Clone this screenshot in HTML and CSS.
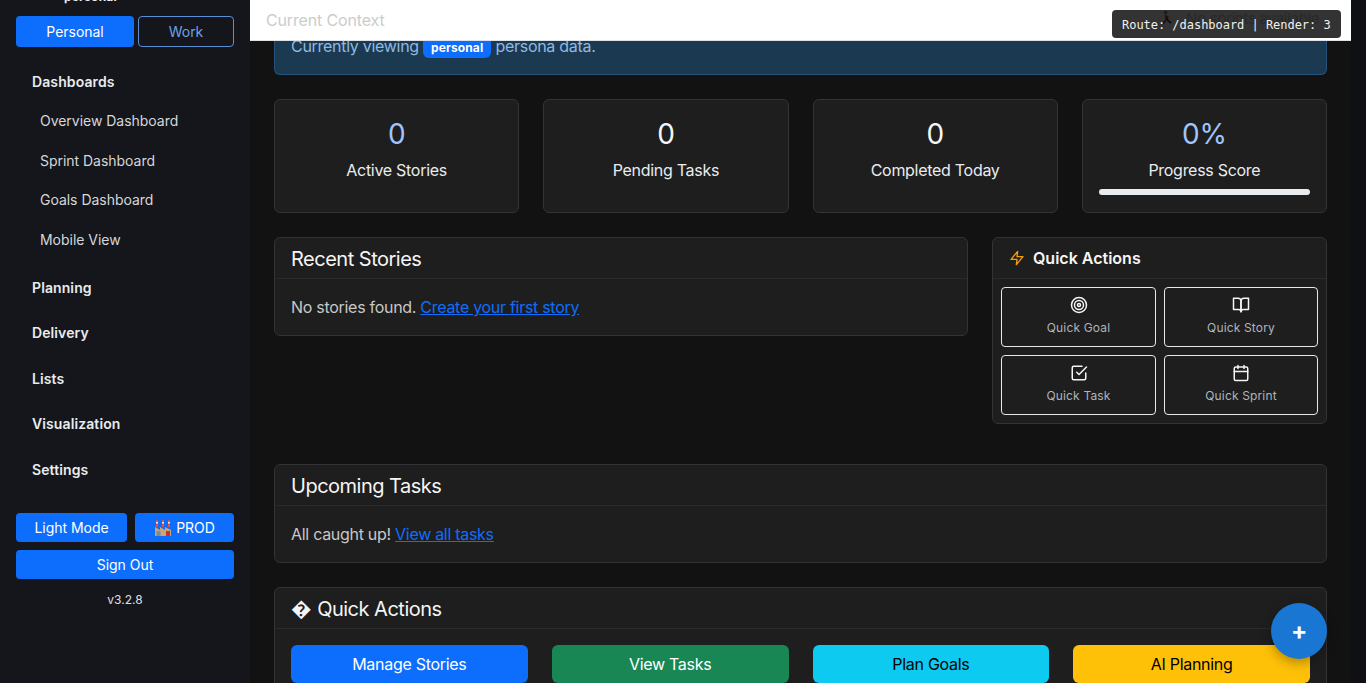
FILE: index.html
```html
<!DOCTYPE html>
<html lang="en">
<head>
    <meta charset="UTF-8">
    <meta name="viewport" content="width=device-width, initial-scale=1.0">
    <title>Dashboard</title>
    <link rel="stylesheet" href="styles.css">
</head>
<body>
    <div class="app">
        <!-- Sidebar -->
        <aside class="sidebar">
            <div class="persona-label">personal</div>
            <div class="persona-switch">
                <button class="btn btn-primary persona-personal">Personal</button>
                <button class="btn persona-work">Work</button>
            </div>
            <nav class="nav">
                <div class="nav-group nav-group-open">Dashboards</div>
                <a class="nav-item">Overview Dashboard</a>
                <a class="nav-item">Sprint Dashboard</a>
                <a class="nav-item">Goals Dashboard</a>
                <a class="nav-item">Mobile View</a>
                <div class="nav-group nav-group-next">Planning</div>
                <div class="nav-group">Delivery</div>
                <div class="nav-group">Lists</div>
                <div class="nav-group">Visualization</div>
                <div class="nav-group">Settings</div>
            </nav>
            <div class="sidebar-footer">
                <div class="footer-row">
                    <button class="btn btn-primary btn-light-mode">Light Mode</button>
                    <button class="btn btn-primary btn-env">
                        <svg class="factory" viewBox="0 0 18 18" width="18" height="18">
                            <rect x="2" y="1" width="2" height="7" fill="#d9534f"/>
                            <rect x="8" y="1" width="2" height="7" fill="#d9534f"/>
                            <rect x="14" y="1" width="2" height="7" fill="#d9534f"/>
                            <rect x="2" y="3" width="2" height="1.5" fill="#f3e9df"/>
                            <rect x="8" y="3" width="2" height="1.5" fill="#f3e9df"/>
                            <rect x="14" y="3" width="2" height="1.5" fill="#f3e9df"/>
                            <path d="M1 8l5 3V8l5 3V8l6 3v6H1z" fill="#c9a47c"/>
                            <rect x="2.5" y="12" width="4" height="5" fill="#7d8c99"/>
                            <rect x="12" y="12" width="4" height="5" fill="#c8322d"/>
                        </svg>
                        PROD
                    </button>
                </div>
                <button class="btn btn-primary btn-signout">Sign Out</button>
                <div class="version">v3.2.8</div>
            </div>
        </aside>

        <!-- Main content -->
        <main class="main">
            <header class="topbar">
                <span class="topbar-title">Current Context</span>
                <svg class="runner" viewBox="0 0 14 18" width="13" height="17">
                    <circle cx="6" cy="2.5" r="2" fill="#b9825a"/>
                    <path d="M5 5l3 1 1 4-3 1z" fill="#a8324a"/>
                    <path d="M6 11l-3 4M7 10l5 4" stroke="#27345e" stroke-width="1.6" fill="none"/>
                    <path d="M8 6l3 3" stroke="#b9825a" stroke-width="1" fill="none"/>
                </svg>
                <span class="topbar-sprint">No sprints available</span>
            </header>

            <div class="content">
                <div class="alert">
                    Currently viewing <span class="badge">personal</span> persona data.
                </div>

                <div class="stats">
                    <div class="card stat">
                        <div class="stat-value stat-blue">0</div>
                        <div class="stat-label">Active Stories</div>
                    </div>
                    <div class="card stat">
                        <div class="stat-value">0</div>
                        <div class="stat-label">Pending Tasks</div>
                    </div>
                    <div class="card stat">
                        <div class="stat-value">0</div>
                        <div class="stat-label">Completed Today</div>
                    </div>
                    <div class="card stat">
                        <div class="stat-value stat-blue">0%</div>
                        <div class="stat-label">Progress Score</div>
                        <div class="progress"></div>
                    </div>
                </div>

                <div class="row-split">
                    <div class="card recent">
                        <div class="card-header">Recent Stories</div>
                        <div class="card-body">No stories found. <a class="link">Create your first story</a></div>
                    </div>
                    <div class="card quick">
                        <div class="quick-header">
                            <svg class="icon-zap" viewBox="0 0 24 24" width="16" height="16">
                                <path d="M13 2 3 14h9l-1 8 10-12h-9l1-8z"/>
                            </svg>
                            Quick Actions
                        </div>
                        <div class="quick-grid">
                            <button class="quick-btn">
                                <svg class="icon" viewBox="0 0 24 24">
                                    <circle cx="12" cy="12" r="10"/>
                                    <circle cx="12" cy="12" r="6"/>
                                    <circle cx="12" cy="12" r="2"/>
                                </svg>
                                Quick Goal
                            </button>
                            <button class="quick-btn">
                                <svg class="icon" viewBox="0 0 24 24">
                                    <path d="M2 3h6a4 4 0 0 1 4 4v14a3 3 0 0 0-3-3H2z"/>
                                    <path d="M22 3h-6a4 4 0 0 0-4 4v14a3 3 0 0 1 3-3h7z"/>
                                </svg>
                                Quick Story
                            </button>
                            <button class="quick-btn">
                                <svg class="icon" viewBox="0 0 24 24">
                                    <path d="m9 11 3 3L22 4"/>
                                    <path d="M21 12v7a2 2 0 0 1-2 2H5a2 2 0 0 1-2-2V5a2 2 0 0 1 2-2h11"/>
                                </svg>
                                Quick Task
                            </button>
                            <button class="quick-btn">
                                <svg class="icon" viewBox="0 0 24 24">
                                    <rect x="3" y="4" width="18" height="18" rx="2"/>
                                    <path d="M16 2v4M8 2v4M3 10h18"/>
                                </svg>
                                Quick Sprint
                            </button>
                        </div>
                    </div>
                </div>

                <div class="card upcoming">
                    <div class="card-header">Upcoming Tasks</div>
                    <div class="card-body">All caught up! <a class="link">View all tasks</a></div>
                </div>

                <div class="card actions">
                    <div class="card-header"><span class="broken-icon">&#xFFFD;</span> Quick Actions</div>
                    <div class="actions-grid">
                        <button class="btn-action action-blue">Manage Stories</button>
                        <button class="btn-action action-green">View Tasks</button>
                        <button class="btn-action action-cyan">Plan Goals</button>
                        <button class="btn-action action-yellow">AI Planning</button>
                    </div>
                </div>
            </div>

            <div class="debug">Route: /dashboard | Render: 3</div>
            <button class="fab">+</button>
        </main>
    </div>
</body>
</html>
```

FILE: styles.css
```css
* {
    box-sizing: border-box;
}

html, body {
    height: 100%;
    overflow: hidden;
}

body {
    margin: 0;
    font-family: Inter, "Liberation Sans", sans-serif;
    font-size: 16px;
    line-height: 1.5;
    letter-spacing: -0.29px;
    background-color: #0f1014;
    color: #dee2e6;
}

button {
    font-family: inherit;
    letter-spacing: inherit;
}

.app {
    display: flex;
    height: 100vh;
    padding-right: 15px;
}

/* Sidebar */
.sidebar {
    width: 250px;
    flex-shrink: 0;
    background-color: #14161b;
    padding: 0 16px;
    overflow: hidden;
    letter-spacing: -0.03px;
}

.persona-label {
    height: 16px;
    margin-top: -11px;
    margin-bottom: 11px;
    padding-left: 48px;
    font-size: 12px;
    font-weight: 700;
    line-height: 16px;
    letter-spacing: 0.2px;
    color: #f1f1f1;
}

.persona-switch {
    display: flex;
    gap: 4px;
}

.btn {
    height: 31px;
    padding: 0;
    border: 1px solid transparent;
    border-radius: 4px;
    font-size: 14px;
    background: none;
}

.btn-primary {
    background-color: #0d6efd;
    color: #fff;
}

.persona-personal {
    width: 118px;
}

.persona-work {
    width: 96px;
    border-color: #5a8fd6;
    color: #6ea0e4;
}

.nav {
    margin-top: 12px;
}

.nav-group {
    height: 45.5px;
    padding-left: 16px;
    font-size: 14px;
    font-weight: 600;
    line-height: 45.5px;
    letter-spacing: 0.1px;
    color: #e9ecef;
}

.nav-group-open {
    margin-bottom: -3.5px;
}

.nav-group-next {
    margin-top: 5.5px;
}

.nav-item {
    display: block;
    height: 39.5px;
    padding-left: 24px;
    font-size: 14px;
    line-height: 39.5px;
    color: #d5d7da;
}

.sidebar-footer {
    margin-top: 21px;
}

.footer-row {
    display: flex;
    gap: 8px;
    margin-bottom: 8px;
}

.footer-row .btn, .btn-signout {
    height: 29px;
}

.btn-light-mode {
    width: 111px;
}

.btn-env {
    width: 99px;
    display: flex;
    align-items: center;
    justify-content: center;
    gap: 4px;
}

.btn-signout {
    width: 100%;
    display: block;
}

.version {
    margin-top: 12px;
    text-align: center;
    font-size: 12px;
    line-height: 18px;
    letter-spacing: 0;
    color: #e0e0e0;
}

/* Main */
.main {
    position: relative;
    flex: 1;
    min-width: 0;
    background-color: #121212;
    overflow: hidden;
}

.topbar {
    position: relative;
    display: flex;
    align-items: center;
    height: 41px;
    padding-left: 16px;
    background-color: #fff;
    border-bottom: 1px solid #dee2e6;
}

.topbar-title {
    letter-spacing: -0.15px;
    color: #ccc;
}

.runner {
    position: absolute;
    left: 910px;
    top: 10px;
}

.topbar-sprint {
    position: absolute;
    left: 936px;
    top: 8px;
    font-size: 15px;
    color: #ccc;
}

.content {
    padding: 0 24px;
}

.alert {
    height: 34px;
    padding: 0 16px;
    background-color: #1b3a52;
    border: 1px solid #24527a;
    border-top: none;
    border-radius: 0 0 6px 6px;
    color: #90b8e0;
    line-height: 11px;
    margin-bottom: 24px;
}

.badge {
    display: inline-block;
    margin-top: -5px;
    padding: 7px 8px 6px;
    background-color: #0d6efd;
    color: #fff;
    border-radius: 6px;
    font-size: 12px;
    font-weight: 700;
    line-height: 9px;
    letter-spacing: 0.1px;
    vertical-align: baseline;
}

.card {
    background-color: #1e1e1e;
    border: 1px solid #333;
    border-radius: 6px;
}

.stats {
    display: grid;
    grid-template-columns: repeat(4, 1fr);
    gap: 24px;
    margin-bottom: 24px;
}

.stat {
    height: 114px;
    padding: 17px 16px 16px;
    text-align: center;
}

.stat-value {
    font-size: 28px;
    font-weight: 400;
    line-height: 34px;
    margin-bottom: 7px;
    letter-spacing: -0.3px;
    color: #f5f5f5;
}

.stat-blue {
    color: #9ec5fe;
}

.stat-label {
    line-height: 24px;
    color: #e9ecef;
}

.progress {
    height: 6px;
    margin-top: 7px;
    background-color: #e9ecef;
    border-radius: 3px;
}

.row-split {
    display: flex;
    gap: 24px;
    align-items: flex-start;
    margin-bottom: 40px;
}

.recent {
    width: 694px;
}

.card-header {
    height: 41px;
    padding: 0 16px;
    border-bottom: 1px solid #2a2a2a;
    font-size: 20px;
    line-height: 42px;
    letter-spacing: -0.5px;
    color: #f5f5f5;
}

.broken-icon {
    font-size: 20.5px;
    letter-spacing: 0;
}

.card-body {
    padding: 16px;
    color: #c8c8c8;
    line-height: 24px;
}

.link {
    color: #0d6efd;
    text-decoration: underline;
}

.quick {
    flex: 1;
    min-width: 0;
}

.quick-header {
    display: flex;
    align-items: center;
    gap: 8px;
    height: 41px;
    padding-left: 16px;
    border-bottom: 1px solid #2a2a2a;
    font-weight: 600;
    letter-spacing: 0;
    color: #f5f5f5;
}

.icon-zap {
    fill: none;
    stroke: #f59e0b;
    stroke-width: 2;
    stroke-linejoin: round;
}

.quick-grid {
    display: grid;
    grid-template-columns: 155px 154px;
    grid-auto-rows: 60px;
    gap: 8px;
    padding: 8px;
}

.quick-btn {
    display: flex;
    flex-direction: column;
    align-items: center;
    gap: 5px;
    padding: 8px 0 0;
    background: none;
    border: 1px solid #e8e8e8;
    border-radius: 4px;
    font-size: 12px;
    line-height: 18px;
    letter-spacing: 0.15px;
    color: #adb5bd;
}

.icon {
    width: 18px;
    height: 18px;
    fill: none;
    stroke: #f5f5f5;
    stroke-width: 2;
    stroke-linecap: round;
    stroke-linejoin: round;
}

.upcoming {
    margin-bottom: 24px;
}

.actions {
    height: 200px;
}

.actions-grid {
    display: grid;
    grid-template-columns: repeat(4, 1fr);
    gap: 24px;
    padding: 16px;
}

.btn-action {
    height: 38px;
    border: none;
    border-radius: 6px;
    font-size: 16px;
}

.action-blue {
    background-color: #0d6efd;
    color: #fff;
}

.action-green {
    background-color: #198754;
    color: #fff;
}

.action-cyan {
    background-color: #0dcaf0;
    color: #000;
}

.action-yellow {
    background-color: #ffc107;
    color: #000;
}

/* Overlays */
.debug {
    position: absolute;
    left: 862px;
    top: 10px;
    width: 229px;
    height: 28px;
    padding-left: 10px;
    background-color: rgba(0, 0, 0, 0.8);
    border-radius: 4px;
    font-family: "DejaVu Sans Mono", monospace;
    font-size: 12px;
    line-height: 31px;
    letter-spacing: -0.03px;
    color: #f0f0f0;
}

.fab {
    position: absolute;
    left: 1021px;
    top: 603px;
    width: 56px;
    height: 56px;
    padding: 0;
    border: none;
    border-radius: 50%;
    background-color: #1976d2;
    color: #fff;
    font-size: 24px;
    font-weight: 700;
    line-height: 56px;
    box-shadow: 0 4px 12px rgba(0, 0, 0, 0.3);
}
```
